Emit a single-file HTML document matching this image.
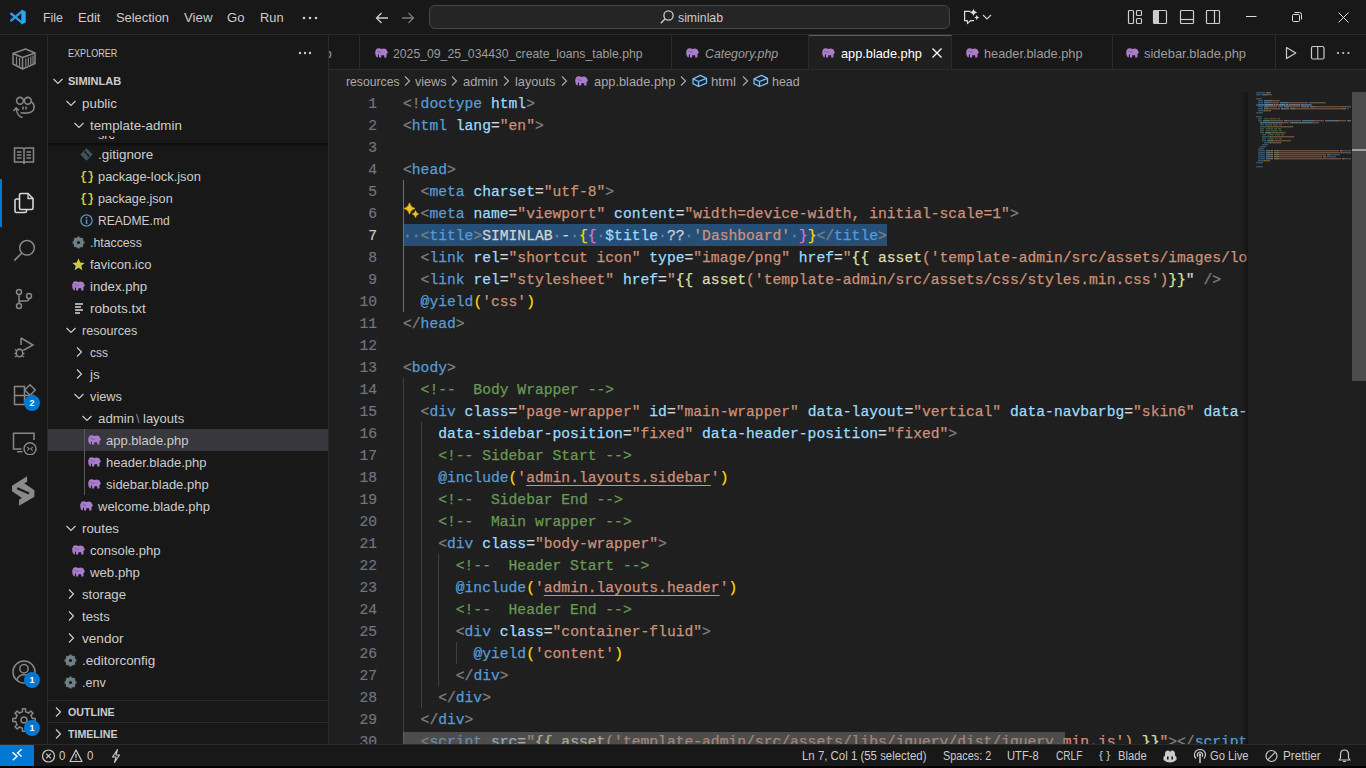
<!DOCTYPE html>
<html><head><meta charset="utf-8">
<style>
*{box-sizing:border-box;margin:0;padding:0}
html,body{width:1366px;height:768px;overflow:hidden;background:#181818;font-family:"Liberation Sans",sans-serif;color:#cccccc}
.abs{position:absolute}
#title{position:absolute;left:0;top:0;width:1366px;height:35px;background:#181818;border-bottom:1px solid #2b2b2b}
.menu{position:absolute;top:9px;font-size:13.5px;color:#cccccc;white-space:nowrap}
#act{position:absolute;left:0;top:35px;width:48px;height:709px;background:#181818;border-right:1px solid #2b2b2b}
#side{position:absolute;left:48px;top:35px;width:281px;height:709px;background:#181818;border-right:1px solid #2b2b2b;overflow:hidden}
.row{position:absolute;left:0;width:280px;height:22px;font-size:13px;line-height:22px;color:#cccccc;white-space:nowrap}
.row .tx{position:absolute;top:0}
.chev{position:absolute;top:6px}
#tabs{position:absolute;left:329px;top:35px;width:1037px;height:35px;background:#181818;border-bottom:1px solid #2b2b2b;overflow:hidden}
.tab{position:absolute;top:0;height:35px;background:#181818;border-right:1px solid #2b2b2b;font-size:13px;color:#9d9d9d;white-space:nowrap}
.tab .tx{position:absolute;top:10px}
#crumbs{position:absolute;left:329px;top:70px;width:1037px;height:22px;background:#1f1f1f;font-size:13px;color:#a9a9a9;white-space:nowrap}
#editor{position:absolute;left:329px;top:92px;width:1037px;height:652px;background:#1f1f1f;overflow:hidden}
#code{position:absolute;left:0;top:-92px;width:919px;height:744px;overflow:hidden}
.ln{position:absolute;left:74px;height:22px;line-height:24px;-webkit-text-stroke:0.25px;font-family:"Liberation Mono",monospace;font-size:14.667px;white-space:pre;color:#d4d4d4}
.num{position:absolute;left:0;width:48px;text-align:right;height:22px;line-height:24px;-webkit-text-stroke:0.2px;font-family:"Liberation Mono",monospace;font-size:14.667px;color:#6e7681}
.num.act{color:#cccccc}
.p{color:#808080}.t{color:#569cd6}.a{color:#9cdcfe}.s{color:#ce9178}.c{color:#6a9955}.w{color:#d4d4d4}
.y{color:#ffd700}.pu{color:#da70d6}.f{color:#dcdcaa}.k{color:#569cd6}.g{color:#d7e3a3}
.su{color:#ce9178;text-decoration:underline;text-underline-offset:3px}
.ws{color:#6b84a0}
.selbg{position:absolute;left:0;top:0;width:484px;height:22px;background:#264f78}
.ln span{position:relative}
.ln span.selbg{position:absolute}
.guide{position:absolute;width:1px;background:#404040}
#status{position:absolute;left:0;top:744px;width:1366px;height:22px;background:#181818;border-top:1px solid #2b2b2b;font-size:12px;color:#cccccc;white-space:nowrap}
#status .it{position:absolute;top:4px}
#bottomblack{position:absolute;left:0;top:766px;width:1366px;height:2px;background:#000}
.badge{position:absolute;width:16px;height:16px;border-radius:8px;background:#0078d4;color:#fff;font-size:9px;font-weight:bold;text-align:center;line-height:16px}
</style></head><body>
<!-- TITLE BAR -->
<div id="title">
<svg class="abs" style="left:9px;top:8px;" width="18" height="18" viewBox="0 0 18 18"><path d="M2.3 5.8 L13 14.6 M2.3 12.4 L13 3.4" stroke="#2b9be6" stroke-width="2.5" stroke-linecap="round"/><path d="M12.3 1.4 L16.7 3.4 V14.6 L12.3 16.6 Z" fill="#27a8f5"/></svg>
<div class="abs" style="left:42.5px;top:10.5px;font-size:13.5px;color:#cccccc;line-height:1;white-space:pre;transform:scaleX(0.9195);transform-origin:0 0;">File</div>
<div class="abs" style="left:78.0px;top:10.5px;font-size:13.5px;color:#cccccc;line-height:1;white-space:pre;transform:scaleX(0.9672);transform-origin:0 0;">Edit</div>
<div class="abs" style="left:115.5px;top:10.5px;font-size:13.5px;color:#cccccc;line-height:1;white-space:pre;transform:scaleX(0.9544);transform-origin:0 0;">Selection</div>
<div class="abs" style="left:183.8px;top:10.5px;font-size:13.5px;color:#cccccc;line-height:1;white-space:pre;transform:scaleX(0.9822);transform-origin:0 0;">View</div>
<div class="abs" style="left:227.3px;top:10.5px;font-size:13.5px;color:#cccccc;line-height:1;white-space:pre;transform:scaleX(0.9718);transform-origin:0 0;">Go</div>
<div class="abs" style="left:260.0px;top:10.5px;font-size:13.5px;color:#cccccc;line-height:1;white-space:pre;transform:scaleX(0.9490);transform-origin:0 0;">Run</div>
<svg class="abs" style="left:302px;top:16px;" width="16" height="4" viewBox="0 0 16 4"><circle cx="2" cy="2" r="1.3" fill="#ccc"/><circle cx="8" cy="2" r="1.3" fill="#ccc"/><circle cx="14" cy="2" r="1.3" fill="#ccc"/></svg>
<svg class="abs" style="left:374px;top:10px;" width="16" height="16" viewBox="0 0 16 16"><path d="M14 8 H2.5 M7.5 3 L2.5 8 L7.5 13" stroke="#cccccc" stroke-width="1.3" fill="none"/></svg>
<svg class="abs" style="left:400px;top:10px;" width="16" height="16" viewBox="0 0 16 16"><path d="M2 8 H13.5 M8.5 3 L13.5 8 L8.5 13" stroke="#7a7a7a" stroke-width="1.3" fill="none"/></svg>
<div class="abs" style="left:429px;top:5px;width:521px;height:24px;border:1px solid #464646;border-radius:6px;background:#252525"></div>
<svg class="abs" style="left:659px;top:9px;" width="16" height="16" viewBox="0 0 16 16"><circle cx="9.5" cy="6.5" r="4.6" stroke="#cccccc" stroke-width="1.3" fill="none"/><path d="M6.2 9.8 L1.8 14.2" stroke="#cccccc" stroke-width="1.4"/></svg>
<div class="abs" style="left:678.0px;top:11.1px;font-size:13px;color:#cccccc;line-height:1;white-space:pre;transform:scaleX(0.9438);transform-origin:0 0;">siminlab</div>
<svg class="abs" style="left:962px;top:8px;" width="20" height="18" viewBox="0 0 20 18"><path d="M8.5 3.4 H2.6 V12.6 H5.2 L5.6 15.4 L8.6 12.6 H12" stroke="#dddddd" stroke-width="1.2" fill="none"/><path d="M11.50 0.60 Q12.11 3.79 15.30 4.40 Q12.11 5.01 11.50 8.20 Q10.89 5.01 7.70 4.40 Q10.89 3.79 11.50 0.60 Z" fill="#dddddd"/><path d="M14.80 7.00 Q15.22 9.18 17.40 9.60 Q15.22 10.02 14.80 12.20 Q14.38 10.02 12.20 9.60 Q14.38 9.18 14.80 7.00 Z" fill="#dddddd"/></svg>
<svg class="abs" style="left:982px;top:12px;" width="10" height="8" viewBox="0 0 10 8"><path d="M1 3 L5 7 L9 3" stroke="#cccccc" stroke-width="1.2" fill="none"/></svg>
<svg class="abs" style="left:1127px;top:9px;" width="16" height="16" viewBox="0 0 16 16"><rect x="1.5" y="1.5" width="5" height="13" rx="1" stroke="#cccccc" stroke-width="1.2" fill="none"/><rect x="9.5" y="1.5" width="5" height="5" rx="1" stroke="#cccccc" stroke-width="1.2" fill="none"/><rect x="9.5" y="9.5" width="5" height="5" rx="1" stroke="#cccccc" stroke-width="1.2" fill="none"/></svg>
<svg class="abs" style="left:1152px;top:9px;" width="16" height="16" viewBox="0 0 16 16"><rect x="1.5" y="1.5" width="13" height="13" rx="1" stroke="#cccccc" stroke-width="1.2" fill="none"/><rect x="2" y="2" width="5" height="12" fill="#cccccc"/></svg>
<svg class="abs" style="left:1179px;top:9px;" width="16" height="16" viewBox="0 0 16 16"><rect x="1.5" y="1.5" width="13" height="13" rx="1" stroke="#cccccc" stroke-width="1.2" fill="none"/><path d="M1.5 10.5 H14.5" stroke="#cccccc" stroke-width="1.2"/></svg>
<svg class="abs" style="left:1205px;top:9px;" width="16" height="16" viewBox="0 0 16 16"><rect x="1.5" y="1.5" width="13" height="13" rx="1" stroke="#cccccc" stroke-width="1.2" fill="none"/><path d="M9.5 1.5 V14.5" stroke="#cccccc" stroke-width="1.2"/></svg>
<svg class="abs" style="left:1246px;top:16px;" width="11" height="1" viewBox="0 0 11 1"><rect x="0" y="0" width="10.5" height="1" fill="#dddddd"/></svg>
<svg class="abs" style="left:1291px;top:11px;" width="12" height="12" viewBox="0 0 12 12"><rect x="1.5" y="3.5" width="7" height="7" rx="1" stroke="#dddddd" stroke-width="1" fill="none"/><path d="M3.5 1.5 H8.5 Q10.5 1.5 10.5 3.5 V8.5" stroke="#dddddd" stroke-width="1" fill="none"/></svg>
<svg class="abs" style="left:1338px;top:12px;" width="11" height="11" viewBox="0 0 11 11"><path d="M0.5 0.5 L10.5 10.5 M10.5 0.5 L0.5 10.5" stroke="#dddddd" stroke-width="1"/></svg>
</div>
<!-- ACTIVITY BAR -->
<div id="act">
<svg class="abs" style="left:12px;top:12px;" width="30" height="24" viewBox="0 0 30 24"><path d="M1 6.5 L13.5 2 L23 6 V16.5 L10.5 22 L1 17 Z M1 6.5 L10.5 10.5 L23 6 M10.5 10.5 V22" stroke="#868686" stroke-width="1.5" fill="none" stroke-linejoin="round"/><path d="M4.5 9.5 V18.5 M7.5 10.8 V20 M13.8 11.5 V19.5 M16.3 10.5 V18.5 M18.8 9.5 V17.5 M21 8.5 V16.5" stroke="#868686" stroke-width="1.2"/></svg>
<svg class="abs" style="left:12px;top:60px;" width="30" height="24" viewBox="0 0 30 24"><circle cx="8" cy="5.8" r="3.4" stroke="#868686" stroke-width="1.6" fill="none"/><circle cx="15.8" cy="5.8" r="3.4" stroke="#868686" stroke-width="1.6" fill="none"/><path d="M19.2 7 Q22.5 8.5 22 13 Q21.5 17.5 15 18 Q11 18.3 8.5 17.5" stroke="#868686" stroke-width="1.6" fill="none"/><path d="M11 11.5 V14.5 M14 11.5 V14.5" stroke="#868686" stroke-width="1.6"/><path d="M10.5 22.5 Q5 21.5 4.2 13.5 M1.5 16 L4.2 12.8 L7 15.5" stroke="#868686" stroke-width="1.5" fill="none"/></svg>
<svg class="abs" style="left:12px;top:108px;" width="30" height="24" viewBox="0 0 30 24"><path d="M2.5 5 H10 Q12 5 12 7 Q12 5 14 5 H21.5 V19 H14 Q12 19 12 21 Q12 19 10 19 H2.5 Z M12 7 V20" stroke="#868686" stroke-width="1.5" fill="none"/><path d="M5 9 H9.5 M5 12 H9.5 M5 15 H9.5 M14.5 9 H19 M14.5 12 H19 M14.5 15 H19" stroke="#868686" stroke-width="1.3"/></svg>
<svg class="abs" style="left:12px;top:156px;" width="30" height="24" viewBox="0 0 30 24"><path d="M9 2.5 H16 L21 7.5 V17 Q21 18.5 19.5 18.5 H9 Q7.5 18.5 7.5 17 V4 Q7.5 2.5 9 2.5 Z" stroke="#d7d7d7" stroke-width="1.6" fill="none"/><path d="M16 2.5 V7.5 H21" stroke="#d7d7d7" stroke-width="1.3" fill="none"/><path d="M7.5 8 H4.5 Q3 8 3 9.5 V20 Q3 21.5 4.5 21.5 H13 Q14.5 21.5 14.5 20 V18.5" stroke="#d7d7d7" stroke-width="1.6" fill="none"/></svg>
<div class="abs" style="left:0;top:144px;width:2px;height:48px;background:#0078d4"></div>
<svg class="abs" style="left:12px;top:204px;" width="30" height="24" viewBox="0 0 30 24"><circle cx="15" cy="8.8" r="7.3" stroke="#868686" stroke-width="1.5" fill="none"/><path d="M9.8 14 L2.2 21.6" stroke="#868686" stroke-width="1.7"/></svg>
<svg class="abs" style="left:12px;top:252px;" width="30" height="24" viewBox="0 0 30 24"><circle cx="7" cy="5" r="2.5" stroke="#868686" stroke-width="1.5" fill="none"/><circle cx="7" cy="19" r="2.5" stroke="#868686" stroke-width="1.5" fill="none"/><circle cx="17" cy="9" r="2.5" stroke="#868686" stroke-width="1.5" fill="none"/><path d="M7 7.5 V16.5 M17 11.5 Q17 14 13 14 H9 Q7 14 7 16" stroke="#868686" stroke-width="1.5" fill="none"/></svg>
<svg class="abs" style="left:12px;top:300px;" width="30" height="24" viewBox="0 0 30 24"><path d="M9 3 V10 M9 3 L21 10 L12 15" stroke="#868686" stroke-width="1.5" fill="none"/><ellipse cx="7.5" cy="18" rx="3.2" ry="3.8" stroke="#868686" stroke-width="1.5" fill="none"/><path d="M3 14.5 L4.8 15.8 M12 14.5 L10.2 15.8 M2.5 18.5 H4.3 M12.5 18.5 H10.7 M3 22 L4.8 20.8 M12 22 L10.2 20.8 M5.5 14.5 H9.5" stroke="#868686" stroke-width="1.3"/></svg>
<svg class="abs" style="left:12px;top:348px;" width="30" height="24" viewBox="0 0 30 24"><path d="M2.5 3.5 H12.5 V21.5 H2.5 Z M2.5 12.5 H21.5 V21.5 H12.5" stroke="#868686" stroke-width="1.5" fill="none"/><path d="M18 1.7 L23.3 7 L18 12.3 L12.7 7 Z" stroke="#868686" stroke-width="1.5" fill="none"/></svg>
<div class="badge" style="left:24px;top:360px">2</div>
<svg class="abs" style="left:12px;top:396px;" width="30" height="24" viewBox="0 0 30 24"><path d="M9.5 18 H1.5 V2.2 H22 V9" stroke="#868686" stroke-width="1.5" fill="none"/><path d="M5 20.7 H10.5" stroke="#868686" stroke-width="1.5"/><circle cx="18" cy="17.8" r="6" stroke="#868686" stroke-width="1.5" fill="none"/><path d="M15.3 16 L17.2 17.8 L15.3 19.6 M20.7 16 L18.8 17.8 L20.7 19.6" stroke="#868686" stroke-width="1.1" fill="none"/></svg>
<svg class="abs" style="left:10px;top:439px;" width="26" height="34" viewBox="0 0 26 34"><path d="M17.1 2.3 V7.8 L14.2 9.3 L24.4 16.2 V22.8 L9.1 31.8 V25.8 L11.9 23.9 L2 17.3 V11.7 Z" fill="#8a8a8a"/><path d="M7.2 14.2 L19 19.6" stroke="#181818" stroke-width="2.2"/></svg>
<svg class="abs" style="left:12px;top:625px;" width="30" height="24" viewBox="0 0 30 24"><circle cx="12" cy="12" r="11" stroke="#868686" stroke-width="1.5" fill="none"/><circle cx="12" cy="8.8" r="4.2" stroke="#868686" stroke-width="1.5" fill="none"/><path d="M4.8 20 Q6.5 14.8 12 14.8 Q17.5 14.8 19.2 20" stroke="#868686" stroke-width="1.5" fill="none"/></svg>
<div class="badge" style="left:24px;top:637px">1</div>
<svg class="abs" style="left:12px;top:673px;" width="30" height="24" viewBox="0 0 30 24"><path d="M19.82 9.23 L20.15 10.42 L23.19 10.43 L23.19 13.57 L20.15 13.58 L19.82 14.77 L19.49 15.57 L18.88 16.64 L21.02 18.80 L18.80 21.02 L16.64 18.88 L15.57 19.49 L14.77 19.82 L13.58 20.15 L13.57 23.19 L10.43 23.19 L10.42 20.15 L9.23 19.82 L8.43 19.49 L7.36 18.88 L5.20 21.02 L2.98 18.80 L5.12 16.64 L4.51 15.57 L4.18 14.77 L3.85 13.58 L0.81 13.57 L0.81 10.43 L3.85 10.42 L4.18 9.23 L4.51 8.43 L5.12 7.36 L2.98 5.20 L5.20 2.98 L7.36 5.12 L8.43 4.51 L9.23 4.18 L10.42 3.85 L10.43 0.81 L13.57 0.81 L13.58 3.85 L14.77 4.18 L15.57 4.51 L16.64 5.12 L18.80 2.98 L21.02 5.20 L18.88 7.36 L19.49 8.43 Z" stroke="#868686" stroke-width="1.5" fill="none" stroke-linejoin="round"/><circle cx="12" cy="12" r="3" stroke="#868686" stroke-width="1.5" fill="none"/></svg>
<div class="badge" style="left:24px;top:685px">1</div>
</div>
<!-- SIDEBAR -->
<div id="side">
<div class="abs" style="left:20.0px;top:12.6px;font-size:11px;color:#cccccc;line-height:1;white-space:pre;transform:scaleX(0.8246);transform-origin:0 0;">EXPLORER</div>
<svg class="abs" style="left:250px;top:16px;" width="14" height="4" viewBox="0 0 14 4"><circle cx="2" cy="2" r="1.2" fill="#ccc"/><circle cx="7" cy="2" r="1.2" fill="#ccc"/><circle cx="12" cy="2" r="1.2" fill="#ccc"/></svg>
<svg class="abs" style="left:2px;top:38px;" width="16" height="16" viewBox="0 0 16 16"><path d="M3.5 6 L8 10.5 L12.5 6" stroke="#cccccc" stroke-width="1.2" fill="none"/></svg>
<div class="abs" style="left:20.0px;top:40.6px;font-size:11px;color:#cccccc;line-height:1;white-space:pre;font-weight:bold;">SIMINLAB</div>
<div class="abs" style="left:0;top:394px;width:280px;height:22px;background:#37373d"></div>
<div class="abs" style="left:36px;top:394px;width:1px;height:66px;background:#585858"></div>
<svg class="abs" style="left:32px;top:112.5px;" width="13" height="13" viewBox="0 0 13 13"><path d="M6.5 0.3 L12.7 6.5 L6.5 12.7 L0.3 6.5 Z" fill="#41535b"/><path d="M5 4 L8.5 7.5" stroke="#181818" stroke-width="1.4"/><circle cx="5" cy="4" r="1" fill="#181818"/><circle cx="8.5" cy="8" r="1" fill="#181818"/></svg><div class="abs" style="left:50.0px;top:112.5px;font-size:13px;color:#cccccc;line-height:1;white-space:pre;transform:scaleX(1.0341);transform-origin:0 0;">.gitignore</div>
<svg class="abs" style="left:32px;top:134px;" width="13" height="14" viewBox="0 0 13 14"><text x="0" y="11" font-family="Liberation Mono" font-weight="bold" font-size="12" fill="#cbcb41">{}</text></svg><div class="abs" style="left:50.0px;top:134.5px;font-size:13px;color:#cccccc;line-height:1;white-space:pre;transform:scaleX(0.9880);transform-origin:0 0;">package-lock.json</div>
<svg class="abs" style="left:32px;top:156px;" width="13" height="14" viewBox="0 0 13 14"><text x="0" y="11" font-family="Liberation Mono" font-weight="bold" font-size="12" fill="#cbcb41">{}</text></svg><div class="abs" style="left:50.0px;top:156.5px;font-size:13px;color:#cccccc;line-height:1;white-space:pre;transform:scaleX(0.9751);transform-origin:0 0;">package.json</div>
<svg class="abs" style="left:32px;top:178.5px;" width="13" height="13" viewBox="0 0 13 13"><circle cx="6.5" cy="6.5" r="5.6" stroke="#519aba" stroke-width="1.3" fill="none"/><rect x="5.8" y="5.5" width="1.5" height="4.5" fill="#519aba"/><rect x="5.8" y="3" width="1.5" height="1.5" fill="#519aba"/></svg><div class="abs" style="left:50.0px;top:178.5px;font-size:13px;color:#cccccc;line-height:1;white-space:pre;transform:scaleX(0.9277);transform-origin:0 0;">README.md</div>
<svg class="abs" style="left:24px;top:200.5px;" width="13" height="13" viewBox="0 0 13 13"><circle cx="6.5" cy="6.5" r="3.9" stroke="#6d8086" stroke-width="2.6" fill="none"/><path d="M6.5 0.5 V12.5 M0.5 6.5 H12.5 M2.3 2.3 L10.7 10.7 M10.7 2.3 L2.3 10.7" stroke="#6d8086" stroke-width="2"/><circle cx="6.5" cy="6.5" r="1.6" fill="#181818"/></svg><div class="abs" style="left:42.0px;top:200.5px;font-size:13px;color:#cccccc;line-height:1;white-space:pre;transform:scaleX(0.9452);transform-origin:0 0;">.htaccess</div>
<svg class="abs" style="left:24px;top:222.5px;" width="13" height="13" viewBox="0 0 13 13"><path d="M6.5 0.5 L8.3 4.6 L12.7 4.9 L9.3 7.8 L10.4 12.2 L6.5 9.8 L2.6 12.2 L3.7 7.8 L0.3 4.9 L4.7 4.6 Z" fill="#cbcb41"/></svg><div class="abs" style="left:42.0px;top:222.5px;font-size:13px;color:#cccccc;line-height:1;white-space:pre;">favicon.ico</div>
<svg class="abs" style="left:24px;top:246px;" width="14" height="10" viewBox="0 0 14 10"><path d="M1.6 9.3 Q0.2 7.5 0.2 4.8 Q0.2 0.4 3.6 0.2 Q5.4 0.2 6.3 1 Q7 0.6 9 0.6 Q11.8 0.8 12.4 3.6 L13 4.6 L11.6 6 L11.4 9.5 H9.2 V7.2 H6.2 V9.5 H4 V6.6 Q3.2 6.4 2.9 6.8 V9.3 Z" fill="#a97dcc"/><path d="M2.4 2.6 Q3.6 4.8 6.6 4.2" stroke="#7b55a0" stroke-width="0.9" fill="none"/></svg><div class="abs" style="left:42.0px;top:244.5px;font-size:13px;color:#cccccc;line-height:1;white-space:pre;transform:scaleX(1.0146);transform-origin:0 0;">index.php</div>
<svg class="abs" style="left:24px;top:267px;" width="12" height="12" viewBox="0 0 12 12"><path d="M3 2 H11 M3 5 H9 M3 8 H11 M3 11 H8" stroke="#d4d7d6" stroke-width="1.4"/></svg><div class="abs" style="left:42.0px;top:266.5px;font-size:13px;color:#cccccc;line-height:1;white-space:pre;transform:scaleX(1.0437);transform-origin:0 0;">robots.txt</div>
<svg class="abs" style="left:15px;top:287px;" width="16" height="16" viewBox="0 0 16 16"><path d="M3.5 6 L8 10.5 L12.5 6" stroke="#cccccc" stroke-width="1.2" fill="none"/></svg><div class="abs" style="left:34.0px;top:288.5px;font-size:13px;color:#cccccc;line-height:1;white-space:pre;transform:scaleX(0.9689);transform-origin:0 0;">resources</div>
<svg class="abs" style="left:23px;top:309px;" width="16" height="16" viewBox="0 0 16 16"><path d="M6 3.5 L10.5 8 L6 12.5" stroke="#cccccc" stroke-width="1.2" fill="none"/></svg><div class="abs" style="left:42.0px;top:310.5px;font-size:13px;color:#cccccc;line-height:1;white-space:pre;transform:scaleX(0.9179);transform-origin:0 0;">css</div>
<svg class="abs" style="left:23px;top:331px;" width="16" height="16" viewBox="0 0 16 16"><path d="M6 3.5 L10.5 8 L6 12.5" stroke="#cccccc" stroke-width="1.2" fill="none"/></svg><div class="abs" style="left:42.0px;top:332.5px;font-size:13px;color:#cccccc;line-height:1;white-space:pre;transform:scaleX(1.0332);transform-origin:0 0;">js</div>
<svg class="abs" style="left:23px;top:353px;" width="16" height="16" viewBox="0 0 16 16"><path d="M3.5 6 L8 10.5 L12.5 6" stroke="#cccccc" stroke-width="1.2" fill="none"/></svg><div class="abs" style="left:42.0px;top:354.5px;font-size:13px;color:#cccccc;line-height:1;white-space:pre;transform:scaleX(0.9844);transform-origin:0 0;">views</div>
<svg class="abs" style="left:31px;top:375px;" width="16" height="16" viewBox="0 0 16 16"><path d="M3.5 6 L8 10.5 L12.5 6" stroke="#cccccc" stroke-width="1.2" fill="none"/></svg><div class="abs" style="left:50.0px;top:376.5px;font-size:13px;color:#cccccc;line-height:1;white-space:pre;transform:scaleX(1.0225);transform-origin:0 0;">admin</div><div class="abs" style="left:88.0px;top:376.5px;font-size:13px;color:#8a8a8a;line-height:1;white-space:pre;">\</div><div class="abs" style="left:95.0px;top:376.5px;font-size:13px;color:#cccccc;line-height:1;white-space:pre;">layouts</div>
<svg class="abs" style="left:40px;top:400px;" width="14" height="10" viewBox="0 0 14 10"><path d="M1.6 9.3 Q0.2 7.5 0.2 4.8 Q0.2 0.4 3.6 0.2 Q5.4 0.2 6.3 1 Q7 0.6 9 0.6 Q11.8 0.8 12.4 3.6 L13 4.6 L11.6 6 L11.4 9.5 H9.2 V7.2 H6.2 V9.5 H4 V6.6 Q3.2 6.4 2.9 6.8 V9.3 Z" fill="#a97dcc"/><path d="M2.4 2.6 Q3.6 4.8 6.6 4.2" stroke="#7b55a0" stroke-width="0.9" fill="none"/></svg><div class="abs" style="left:58.0px;top:398.5px;font-size:13px;color:#cccccc;line-height:1;white-space:pre;">app.blade.php</div>
<svg class="abs" style="left:40px;top:422px;" width="14" height="10" viewBox="0 0 14 10"><path d="M1.6 9.3 Q0.2 7.5 0.2 4.8 Q0.2 0.4 3.6 0.2 Q5.4 0.2 6.3 1 Q7 0.6 9 0.6 Q11.8 0.8 12.4 3.6 L13 4.6 L11.6 6 L11.4 9.5 H9.2 V7.2 H6.2 V9.5 H4 V6.6 Q3.2 6.4 2.9 6.8 V9.3 Z" fill="#a97dcc"/><path d="M2.4 2.6 Q3.6 4.8 6.6 4.2" stroke="#7b55a0" stroke-width="0.9" fill="none"/></svg><div class="abs" style="left:58.0px;top:420.5px;font-size:13px;color:#cccccc;line-height:1;white-space:pre;">header.blade.php</div>
<svg class="abs" style="left:40px;top:444px;" width="14" height="10" viewBox="0 0 14 10"><path d="M1.6 9.3 Q0.2 7.5 0.2 4.8 Q0.2 0.4 3.6 0.2 Q5.4 0.2 6.3 1 Q7 0.6 9 0.6 Q11.8 0.8 12.4 3.6 L13 4.6 L11.6 6 L11.4 9.5 H9.2 V7.2 H6.2 V9.5 H4 V6.6 Q3.2 6.4 2.9 6.8 V9.3 Z" fill="#a97dcc"/><path d="M2.4 2.6 Q3.6 4.8 6.6 4.2" stroke="#7b55a0" stroke-width="0.9" fill="none"/></svg><div class="abs" style="left:58.0px;top:442.5px;font-size:13px;color:#cccccc;line-height:1;white-space:pre;">sidebar.blade.php</div>
<svg class="abs" style="left:32px;top:466px;" width="14" height="10" viewBox="0 0 14 10"><path d="M1.6 9.3 Q0.2 7.5 0.2 4.8 Q0.2 0.4 3.6 0.2 Q5.4 0.2 6.3 1 Q7 0.6 9 0.6 Q11.8 0.8 12.4 3.6 L13 4.6 L11.6 6 L11.4 9.5 H9.2 V7.2 H6.2 V9.5 H4 V6.6 Q3.2 6.4 2.9 6.8 V9.3 Z" fill="#a97dcc"/><path d="M2.4 2.6 Q3.6 4.8 6.6 4.2" stroke="#7b55a0" stroke-width="0.9" fill="none"/></svg><div class="abs" style="left:50.0px;top:464.5px;font-size:13px;color:#cccccc;line-height:1;white-space:pre;">welcome.blade.php</div>
<svg class="abs" style="left:15px;top:485px;" width="16" height="16" viewBox="0 0 16 16"><path d="M3.5 6 L8 10.5 L12.5 6" stroke="#cccccc" stroke-width="1.2" fill="none"/></svg><div class="abs" style="left:34.0px;top:486.5px;font-size:13px;color:#cccccc;line-height:1;white-space:pre;transform:scaleX(1.0241);transform-origin:0 0;">routes</div>
<svg class="abs" style="left:24px;top:510px;" width="14" height="10" viewBox="0 0 14 10"><path d="M1.6 9.3 Q0.2 7.5 0.2 4.8 Q0.2 0.4 3.6 0.2 Q5.4 0.2 6.3 1 Q7 0.6 9 0.6 Q11.8 0.8 12.4 3.6 L13 4.6 L11.6 6 L11.4 9.5 H9.2 V7.2 H6.2 V9.5 H4 V6.6 Q3.2 6.4 2.9 6.8 V9.3 Z" fill="#a97dcc"/><path d="M2.4 2.6 Q3.6 4.8 6.6 4.2" stroke="#7b55a0" stroke-width="0.9" fill="none"/></svg><div class="abs" style="left:42.0px;top:508.5px;font-size:13px;color:#cccccc;line-height:1;white-space:pre;transform:scaleX(1.0056);transform-origin:0 0;">console.php</div>
<svg class="abs" style="left:24px;top:532px;" width="14" height="10" viewBox="0 0 14 10"><path d="M1.6 9.3 Q0.2 7.5 0.2 4.8 Q0.2 0.4 3.6 0.2 Q5.4 0.2 6.3 1 Q7 0.6 9 0.6 Q11.8 0.8 12.4 3.6 L13 4.6 L11.6 6 L11.4 9.5 H9.2 V7.2 H6.2 V9.5 H4 V6.6 Q3.2 6.4 2.9 6.8 V9.3 Z" fill="#a97dcc"/><path d="M2.4 2.6 Q3.6 4.8 6.6 4.2" stroke="#7b55a0" stroke-width="0.9" fill="none"/></svg><div class="abs" style="left:42.0px;top:530.5px;font-size:13px;color:#cccccc;line-height:1;white-space:pre;transform:scaleX(1.0153);transform-origin:0 0;">web.php</div>
<svg class="abs" style="left:15px;top:551px;" width="16" height="16" viewBox="0 0 16 16"><path d="M6 3.5 L10.5 8 L6 12.5" stroke="#cccccc" stroke-width="1.2" fill="none"/></svg><div class="abs" style="left:34.0px;top:552.5px;font-size:13px;color:#cccccc;line-height:1;white-space:pre;transform:scaleX(1.0148);transform-origin:0 0;">storage</div>
<svg class="abs" style="left:15px;top:573px;" width="16" height="16" viewBox="0 0 16 16"><path d="M6 3.5 L10.5 8 L6 12.5" stroke="#cccccc" stroke-width="1.2" fill="none"/></svg><div class="abs" style="left:34.0px;top:574.5px;font-size:13px;color:#cccccc;line-height:1;white-space:pre;transform:scaleX(1.0090);transform-origin:0 0;">tests</div>
<svg class="abs" style="left:15px;top:595px;" width="16" height="16" viewBox="0 0 16 16"><path d="M6 3.5 L10.5 8 L6 12.5" stroke="#cccccc" stroke-width="1.2" fill="none"/></svg><div class="abs" style="left:34.0px;top:596.5px;font-size:13px;color:#cccccc;line-height:1;white-space:pre;transform:scaleX(1.0441);transform-origin:0 0;">vendor</div>
<svg class="abs" style="left:16px;top:618.5px;" width="13" height="13" viewBox="0 0 13 13"><circle cx="6.5" cy="6.5" r="3.9" stroke="#6d8086" stroke-width="2.6" fill="none"/><path d="M6.5 0.5 V12.5 M0.5 6.5 H12.5 M2.3 2.3 L10.7 10.7 M10.7 2.3 L2.3 10.7" stroke="#6d8086" stroke-width="2"/><circle cx="6.5" cy="6.5" r="1.6" fill="#181818"/></svg><div class="abs" style="left:34.0px;top:618.5px;font-size:13px;color:#cccccc;line-height:1;white-space:pre;transform:scaleX(1.0351);transform-origin:0 0;">.editorconfig</div>
<svg class="abs" style="left:16px;top:640.5px;" width="13" height="13" viewBox="0 0 13 13"><circle cx="6.5" cy="6.5" r="3.9" stroke="#6d8086" stroke-width="2.6" fill="none"/><path d="M6.5 0.5 V12.5 M0.5 6.5 H12.5 M2.3 2.3 L10.7 10.7 M10.7 2.3 L2.3 10.7" stroke="#6d8086" stroke-width="2"/><circle cx="6.5" cy="6.5" r="1.6" fill="#181818"/></svg><div class="abs" style="left:34.0px;top:640.5px;font-size:13px;color:#cccccc;line-height:1;white-space:pre;transform:scaleX(0.9687);transform-origin:0 0;">.env</div>
<svg class="abs" style="left:20px;top:664.5px;" width="4" height="4" viewBox="0 0 4 4"><rect x="1" y="0" width="2" height="3" fill="#8dc149"/></svg><div class="abs" style="left:34.0px;top:662.5px;font-size:13px;color:#cccccc;line-height:1;white-space:pre;transform:scaleX(0.9650);transform-origin:0 0;">.env.example</div>
<div class="abs" style="left:0;top:57px;width:280px;height:51px;background:#181818;overflow:hidden;box-shadow:0 2px 3px rgba(0,0,0,0.55)">
<div class="abs" style="left:50.0px;top:35.5px;font-size:13px;color:#cccccc;line-height:1;white-space:pre;transform:scaleX(0.9637);transform-origin:0 0;">src</div>
<div class="abs" style="left:0;top:0;width:280px;height:44px;background:#181818"></div>
<svg class="abs" style="left:15px;top:3px;" width="16" height="16" viewBox="0 0 16 16"><path d="M3.5 6 L8 10.5 L12.5 6" stroke="#cccccc" stroke-width="1.2" fill="none"/></svg>
<div class="abs" style="left:34.0px;top:4.5px;font-size:13px;color:#cccccc;line-height:1;white-space:pre;transform:scaleX(1.0305);transform-origin:0 0;">public</div>
<svg class="abs" style="left:23px;top:25px;" width="16" height="16" viewBox="0 0 16 16"><path d="M3.5 6 L8 10.5 L12.5 6" stroke="#cccccc" stroke-width="1.2" fill="none"/></svg>
<div class="abs" style="left:42.0px;top:26.5px;font-size:13px;color:#cccccc;line-height:1;white-space:pre;transform:scaleX(1.0247);transform-origin:0 0;">template-admin</div>
</div>
<div class="abs" style="left:0;top:665px;width:280px;height:44px;background:#181818;border-top:1px solid #2b2b2b"></div>
<div class="abs" style="left:0;top:687px;width:280px;height:1px;background:#2b2b2b"></div>
<svg class="abs" style="left:2px;top:669px;" width="16" height="16" viewBox="0 0 16 16"><path d="M6 3.5 L10.5 8 L6 12.5" stroke="#cccccc" stroke-width="1.2" fill="none"/></svg>
<div class="abs" style="left:20.0px;top:671.6px;font-size:11px;color:#cccccc;line-height:1;white-space:pre;font-weight:bold;transform:scaleX(0.9674);transform-origin:0 0;">OUTLINE</div>
<svg class="abs" style="left:2px;top:691px;" width="16" height="16" viewBox="0 0 16 16"><path d="M6 3.5 L10.5 8 L6 12.5" stroke="#cccccc" stroke-width="1.2" fill="none"/></svg>
<div class="abs" style="left:20.0px;top:693.6px;font-size:11px;color:#cccccc;line-height:1;white-space:pre;font-weight:bold;transform:scaleX(0.9643);transform-origin:0 0;">TIMELINE</div>
</div>
<!-- TABS -->
<div id="tabs">
<div class="tab" style="left:-20px;width:51px"></div>
<div class="abs" style="left:-19.0px;top:11.5px;font-size:13px;color:#9d9d9d;line-height:1;white-space:pre;">php</div>
<div class="tab" style="left:31px;width:312px;"></div><svg class="abs" style="left:45.5px;top:13px;" width="14" height="10" viewBox="0 0 14 10"><path d="M1.6 9.3 Q0.2 7.5 0.2 4.8 Q0.2 0.4 3.6 0.2 Q5.4 0.2 6.3 1 Q7 0.6 9 0.6 Q11.8 0.8 12.4 3.6 L13 4.6 L11.6 6 L11.4 9.5 H9.2 V7.2 H6.2 V9.5 H4 V6.6 Q3.2 6.4 2.9 6.8 V9.3 Z" fill="#a97dcc"/><path d="M2.4 2.6 Q3.6 4.8 6.6 4.2" stroke="#7b55a0" stroke-width="0.9" fill="none"/></svg><div class="abs" style="left:64.3px;top:11.5px;font-size:13px;color:#9d9d9d;line-height:1;white-space:pre;transform:scaleX(0.9409);transform-origin:0 0;">2025_09_25_034430_create_loans_table.php</div>
<div class="tab" style="left:343px;width:137px;"></div><svg class="abs" style="left:356.6px;top:13px;" width="14" height="10" viewBox="0 0 14 10"><path d="M1.6 9.3 Q0.2 7.5 0.2 4.8 Q0.2 0.4 3.6 0.2 Q5.4 0.2 6.3 1 Q7 0.6 9 0.6 Q11.8 0.8 12.4 3.6 L13 4.6 L11.6 6 L11.4 9.5 H9.2 V7.2 H6.2 V9.5 H4 V6.6 Q3.2 6.4 2.9 6.8 V9.3 Z" fill="#a97dcc"/><path d="M2.4 2.6 Q3.6 4.8 6.6 4.2" stroke="#7b55a0" stroke-width="0.9" fill="none"/></svg><div class="abs" style="left:375.8px;top:11.5px;font-size:13px;color:#9d9d9d;line-height:1;white-space:pre;font-style:italic;transform:scaleX(0.9497);transform-origin:0 0;">Category.php</div>
<div class="tab" style="left:480px;width:143px;background:#1f1f1f;height:36px;border-top:1px solid #0078d4;"></div><svg class="abs" style="left:492.79999999999995px;top:13px;" width="14" height="10" viewBox="0 0 14 10"><path d="M1.6 9.3 Q0.2 7.5 0.2 4.8 Q0.2 0.4 3.6 0.2 Q5.4 0.2 6.3 1 Q7 0.6 9 0.6 Q11.8 0.8 12.4 3.6 L13 4.6 L11.6 6 L11.4 9.5 H9.2 V7.2 H6.2 V9.5 H4 V6.6 Q3.2 6.4 2.9 6.8 V9.3 Z" fill="#a97dcc"/><path d="M2.4 2.6 Q3.6 4.8 6.6 4.2" stroke="#7b55a0" stroke-width="0.9" fill="none"/></svg><div class="abs" style="left:512.0px;top:11.5px;font-size:13px;color:#ffffff;line-height:1;white-space:pre;transform:scaleX(0.9805);transform-origin:0 0;">app.blade.php</div><svg class="abs" style="left:602px;top:12px;" width="12" height="12" viewBox="0 0 12 12"><path d="M1.5 1.5 L10.5 10.5 M10.5 1.5 L1.5 10.5" stroke="#ffffff" stroke-width="1.3"/></svg>
<div class="tab" style="left:623px;width:161px;"></div><svg class="abs" style="left:636.6px;top:13px;" width="14" height="10" viewBox="0 0 14 10"><path d="M1.6 9.3 Q0.2 7.5 0.2 4.8 Q0.2 0.4 3.6 0.2 Q5.4 0.2 6.3 1 Q7 0.6 9 0.6 Q11.8 0.8 12.4 3.6 L13 4.6 L11.6 6 L11.4 9.5 H9.2 V7.2 H6.2 V9.5 H4 V6.6 Q3.2 6.4 2.9 6.8 V9.3 Z" fill="#a97dcc"/><path d="M2.4 2.6 Q3.6 4.8 6.6 4.2" stroke="#7b55a0" stroke-width="0.9" fill="none"/></svg><div class="abs" style="left:655.3px;top:11.5px;font-size:13px;color:#9d9d9d;line-height:1;white-space:pre;transform:scaleX(0.9804);transform-origin:0 0;">header.blade.php</div>
<div class="tab" style="left:784px;width:163px;"></div><svg class="abs" style="left:797px;top:13px;" width="14" height="10" viewBox="0 0 14 10"><path d="M1.6 9.3 Q0.2 7.5 0.2 4.8 Q0.2 0.4 3.6 0.2 Q5.4 0.2 6.3 1 Q7 0.6 9 0.6 Q11.8 0.8 12.4 3.6 L13 4.6 L11.6 6 L11.4 9.5 H9.2 V7.2 H6.2 V9.5 H4 V6.6 Q3.2 6.4 2.9 6.8 V9.3 Z" fill="#a97dcc"/><path d="M2.4 2.6 Q3.6 4.8 6.6 4.2" stroke="#7b55a0" stroke-width="0.9" fill="none"/></svg><div class="abs" style="left:815.2px;top:11.5px;font-size:13px;color:#9d9d9d;line-height:1;white-space:pre;transform:scaleX(0.9938);transform-origin:0 0;">sidebar.blade.php</div>
<svg class="abs" style="left:955px;top:10px;" width="16" height="16" viewBox="0 0 16 16"><path d="M2.5 2.5 L11.8 8 L2.5 13.5 Z" stroke="#cccccc" stroke-width="1.2" fill="none" stroke-linejoin="round"/></svg>
<svg class="abs" style="left:981px;top:10px;" width="16" height="16" viewBox="0 0 16 16"><rect x="1.5" y="1.5" width="12.5" height="12.5" rx="1.5" stroke="#cccccc" stroke-width="1.2" fill="none"/><path d="M7.75 1.5 V14" stroke="#cccccc" stroke-width="1.1"/></svg>
<svg class="abs" style="left:1007px;top:16px;" width="16" height="4" viewBox="0 0 16 4"><circle cx="2" cy="2" r="1.1" fill="#ccc"/><circle cx="7.2" cy="2" r="1.1" fill="#ccc"/><circle cx="12.4" cy="2" r="1.1" fill="#ccc"/></svg>
</div>
<div id="crumbs">
<div class="abs" style="left:16.6px;top:4.5px;font-size:13px;color:#a9a9a9;line-height:1;white-space:pre;transform:scaleX(0.9374);transform-origin:0 0;">resources</div>
<svg class="abs" style="left:69.69999999999999px;top:3px;" width="16" height="16" viewBox="0 0 16 16"><path d="M6 3.5 L10.5 8 L6 12.5" stroke="#a9a9a9" stroke-width="1.2" fill="none"/></svg>
<svg class="abs" style="left:117.30000000000001px;top:3px;" width="16" height="16" viewBox="0 0 16 16"><path d="M6 3.5 L10.5 8 L6 12.5" stroke="#a9a9a9" stroke-width="1.2" fill="none"/></svg>
<svg class="abs" style="left:169px;top:3px;" width="16" height="16" viewBox="0 0 16 16"><path d="M6 3.5 L10.5 8 L6 12.5" stroke="#a9a9a9" stroke-width="1.2" fill="none"/></svg>
<svg class="abs" style="left:226.70000000000005px;top:3px;" width="16" height="16" viewBox="0 0 16 16"><path d="M6 3.5 L10.5 8 L6 12.5" stroke="#a9a9a9" stroke-width="1.2" fill="none"/></svg>
<svg class="abs" style="left:346px;top:3px;" width="16" height="16" viewBox="0 0 16 16"><path d="M6 3.5 L10.5 8 L6 12.5" stroke="#a9a9a9" stroke-width="1.2" fill="none"/></svg>
<svg class="abs" style="left:407.6px;top:3px;" width="16" height="16" viewBox="0 0 16 16"><path d="M6 3.5 L10.5 8 L6 12.5" stroke="#a9a9a9" stroke-width="1.2" fill="none"/></svg>
<div class="abs" style="left:86.4px;top:4.5px;font-size:13px;color:#a9a9a9;line-height:1;white-space:pre;transform:scaleX(0.9690);transform-origin:0 0;">views</div>
<div class="abs" style="left:134.0px;top:4.5px;font-size:13px;color:#a9a9a9;line-height:1;white-space:pre;transform:scaleX(0.9886);transform-origin:0 0;">admin</div>
<div class="abs" style="left:186.3px;top:4.5px;font-size:13px;color:#a9a9a9;line-height:1;white-space:pre;transform:scaleX(0.9784);transform-origin:0 0;">layouts</div>
<svg class="abs" style="left:246px;top:6px;" width="14" height="10" viewBox="0 0 14 10"><path d="M1.6 9.3 Q0.2 7.5 0.2 4.8 Q0.2 0.4 3.6 0.2 Q5.4 0.2 6.3 1 Q7 0.6 9 0.6 Q11.8 0.8 12.4 3.6 L13 4.6 L11.6 6 L11.4 9.5 H9.2 V7.2 H6.2 V9.5 H4 V6.6 Q3.2 6.4 2.9 6.8 V9.3 Z" fill="#a97dcc"/><path d="M2.4 2.6 Q3.6 4.8 6.6 4.2" stroke="#7b55a0" stroke-width="0.9" fill="none"/></svg>
<div class="abs" style="left:265.0px;top:4.5px;font-size:13px;color:#a9a9a9;line-height:1;white-space:pre;transform:scaleX(0.9866);transform-origin:0 0;">app.blade.php</div>
<svg class="abs" style="left:363px;top:4px;" width="16" height="14" viewBox="0 0 16 14"><path d="M1 4.8 L8.4 1.3 L14.5 4.3 V9.2 L6.5 12.5 L1 9.7 Z M1 4.8 L6.5 7.5 L14.5 4.3 M6.5 7.5 V12.5" stroke="#75beff" stroke-width="1.3" fill="none" stroke-linejoin="round"/></svg>
<div class="abs" style="left:382.0px;top:4.5px;font-size:13px;color:#a9a9a9;line-height:1;white-space:pre;transform:scaleX(1.0180);transform-origin:0 0;">html</div>
<svg class="abs" style="left:424px;top:4px;" width="16" height="14" viewBox="0 0 16 14"><path d="M1 4.8 L8.4 1.3 L14.5 4.3 V9.2 L6.5 12.5 L1 9.7 Z M1 4.8 L6.5 7.5 L14.5 4.3 M6.5 7.5 V12.5" stroke="#75beff" stroke-width="1.3" fill="none" stroke-linejoin="round"/></svg>
<div class="abs" style="left:443.0px;top:4.5px;font-size:13px;color:#a9a9a9;line-height:1;white-space:pre;transform:scaleX(0.9579);transform-origin:0 0;">head</div>
</div>
<div id="editor"><div id="code">
<div class="ln" style="top:92px"><span class="p">&lt;!</span><span class="t">doctype</span><span class="w"> </span><span class="a">html</span><span class="p">&gt;</span></div>
<div class="num" style="top:92px">1</div>
<div class="ln" style="top:114px"><span class="w"></span><span class="p">&lt;</span><span class="t">html</span><span class="w"> </span><span class="a">lang</span><span class="w">=</span><span class="s">&quot;en&quot;</span><span class="p">&gt;</span></div>
<div class="num" style="top:114px">2</div>
<div class="ln" style="top:136px"></div>
<div class="num" style="top:136px">3</div>
<div class="ln" style="top:158px"><span class="p">&lt;</span><span class="t">head</span><span class="p">&gt;</span></div>
<div class="num" style="top:158px">4</div>
<div class="ln" style="top:180px"><span class="w">  </span><span class="p">&lt;</span><span class="t">meta</span><span class="w"> </span><span class="a">charset</span><span class="w">=</span><span class="s">&quot;utf-8&quot;</span><span class="p">&gt;</span></div>
<div class="num" style="top:180px">5</div>
<div class="ln" style="top:202px"><span class="w">  </span><span class="p">&lt;</span><span class="t">meta</span><span class="w"> </span><span class="a">name</span><span class="w">=</span><span class="s">&quot;viewport&quot;</span><span class="w"> </span><span class="a">content</span><span class="w">=</span><span class="s">&quot;width=device-width, initial-scale=1&quot;</span><span class="p">&gt;</span></div>
<div class="num" style="top:202px">6</div>
<div class="ln" style="top:224px"><span class="selbg"></span><span class="ws">··</span><span class="p">&lt;</span><span class="t">title</span><span class="p">&gt;</span><span class="w">SIMINLAB</span><span class="ws">·</span><span class="w">-</span><span class="ws">·</span><span class="y">{</span><span class="pu">{</span><span class="ws">·</span><span class="a">$title</span><span class="ws">·</span><span class="w">??</span><span class="ws">·</span><span class="s">'Dashboard'</span><span class="ws">·</span><span class="pu">}</span><span class="y">}</span><span class="p">&lt;/</span><span class="t">title</span><span class="p">&gt;</span></div>
<div class="num act" style="top:224px">7</div>
<div class="ln" style="top:246px"><span class="w">  </span><span class="p">&lt;</span><span class="t">link</span><span class="w"> </span><span class="a">rel</span><span class="w">=</span><span class="s">&quot;shortcut icon&quot;</span><span class="w"> </span><span class="a">type</span><span class="w">=</span><span class="s">&quot;image/png&quot;</span><span class="w"> </span><span class="a">href</span><span class="w">=</span><span class="s">&quot;</span><span class="g">{{</span><span class="w"> </span><span class="f">asset</span><span class="s">(&#x27;template-admin/src/assets/images/logos/favicon.png&#x27;)</span><span class="w"> </span><span class="g">}}</span><span class="s">&quot;</span><span class="w"> </span><span class="p">/&gt;</span></div>
<div class="num" style="top:246px">8</div>
<div class="ln" style="top:268px"><span class="w">  </span><span class="p">&lt;</span><span class="t">link</span><span class="w"> </span><span class="a">rel</span><span class="w">=</span><span class="s">&quot;stylesheet&quot;</span><span class="w"> </span><span class="a">href</span><span class="w">=</span><span class="s">&quot;</span><span class="g">{{</span><span class="w"> </span><span class="f">asset</span><span class="s">(&#x27;template-admin/src/assets/css/styles.min.css&#x27;)</span><span class="g">}}</span><span class="w">&quot;</span><span class="w"> </span><span class="p">/&gt;</span></div>
<div class="num" style="top:268px">9</div>
<div class="ln" style="top:290px"><span class="w">  </span><span class="k">@yield</span><span class="y">(</span><span class="s">&#x27;css&#x27;</span><span class="y">)</span></div>
<div class="num" style="top:290px">10</div>
<div class="ln" style="top:312px"><span class="p">&lt;/</span><span class="t">head</span><span class="p">&gt;</span></div>
<div class="num" style="top:312px">11</div>
<div class="ln" style="top:334px"></div>
<div class="num" style="top:334px">12</div>
<div class="ln" style="top:356px"><span class="p">&lt;</span><span class="t">body</span><span class="p">&gt;</span></div>
<div class="num" style="top:356px">13</div>
<div class="ln" style="top:378px"><span class="w">  </span><span class="c">&lt;!--  Body Wrapper --&gt;</span></div>
<div class="num" style="top:378px">14</div>
<div class="ln" style="top:400px"><span class="w">  </span><span class="p">&lt;</span><span class="t">div</span><span class="w"> </span><span class="a">class</span><span class="w">=</span><span class="s">&quot;page-wrapper&quot;</span><span class="w"> </span><span class="a">id</span><span class="w">=</span><span class="s">&quot;main-wrapper&quot;</span><span class="w"> </span><span class="a">data-layout</span><span class="w">=</span><span class="s">&quot;vertical&quot;</span><span class="w"> </span><span class="a">data-navbarbg</span><span class="w">=</span><span class="s">&quot;skin6&quot;</span><span class="w"> </span><span class="a">data-sidebartype</span><span class="w">=</span><span class="s">&quot;full&quot;</span><span class="p"></span></div>
<div class="num" style="top:400px">15</div>
<div class="ln" style="top:422px"><span class="w">    </span><span class="a">data-sidebar-position</span><span class="w">=</span><span class="s">&quot;fixed&quot;</span><span class="w"> </span><span class="a">data-header-position</span><span class="w">=</span><span class="s">&quot;fixed&quot;</span><span class="p">&gt;</span></div>
<div class="num" style="top:422px">16</div>
<div class="ln" style="top:444px"><span class="w">    </span><span class="c">&lt;!-- Sidebar Start --&gt;</span></div>
<div class="num" style="top:444px">17</div>
<div class="ln" style="top:466px"><span class="w">    </span><span class="k">@include</span><span class="y">(</span><span class="s">&#x27;</span><span class="su">admin.layouts.sidebar</span><span class="s">&#x27;</span><span class="y">)</span></div>
<div class="num" style="top:466px">18</div>
<div class="ln" style="top:488px"><span class="w">    </span><span class="c">&lt;!--  Sidebar End --&gt;</span></div>
<div class="num" style="top:488px">19</div>
<div class="ln" style="top:510px"><span class="w">    </span><span class="c">&lt;!--  Main wrapper --&gt;</span></div>
<div class="num" style="top:510px">20</div>
<div class="ln" style="top:532px"><span class="w">    </span><span class="p">&lt;</span><span class="t">div</span><span class="w"> </span><span class="a">class</span><span class="w">=</span><span class="s">&quot;body-wrapper&quot;</span><span class="p">&gt;</span></div>
<div class="num" style="top:532px">21</div>
<div class="ln" style="top:554px"><span class="w">      </span><span class="c">&lt;!--  Header Start --&gt;</span></div>
<div class="num" style="top:554px">22</div>
<div class="ln" style="top:576px"><span class="w">      </span><span class="k">@include</span><span class="y">(</span><span class="s">&#x27;</span><span class="su">admin.layouts.header</span><span class="s">&#x27;</span><span class="y">)</span></div>
<div class="num" style="top:576px">23</div>
<div class="ln" style="top:598px"><span class="w">      </span><span class="c">&lt;!--  Header End --&gt;</span></div>
<div class="num" style="top:598px">24</div>
<div class="ln" style="top:620px"><span class="w">      </span><span class="p">&lt;</span><span class="t">div</span><span class="w"> </span><span class="a">class</span><span class="w">=</span><span class="s">&quot;container-fluid&quot;</span><span class="p">&gt;</span></div>
<div class="num" style="top:620px">25</div>
<div class="ln" style="top:642px"><span class="w">        </span><span class="k">@yield</span><span class="y">(</span><span class="s">&#x27;content&#x27;</span><span class="y">)</span></div>
<div class="num" style="top:642px">26</div>
<div class="ln" style="top:664px"><span class="w">      </span><span class="p">&lt;/</span><span class="t">div</span><span class="p">&gt;</span></div>
<div class="num" style="top:664px">27</div>
<div class="ln" style="top:686px"><span class="w">    </span><span class="p">&lt;/</span><span class="t">div</span><span class="p">&gt;</span></div>
<div class="num" style="top:686px">28</div>
<div class="ln" style="top:708px"><span class="w">  </span><span class="p">&lt;/</span><span class="t">div</span><span class="p">&gt;</span></div>
<div class="num" style="top:708px">29</div>
<div class="ln" style="top:730px"><span class="w">  </span><span class="p">&lt;</span><span class="t">script</span><span class="w"> </span><span class="a">src</span><span class="w">=</span><span class="s">&quot;</span><span class="g">{{</span><span class="w"> </span><span class="f">asset</span><span class="s">(&#x27;template-admin/src/assets/libs/jquery/dist/jquery.min.js&#x27;)</span><span class="w"> </span><span class="g">}}</span><span class="s">&quot;</span><span class="p">&gt;&lt;/</span><span class="t">script</span><span class="p">&gt;</span></div>
<div class="num" style="top:730px">30</div>
</div>
<div class="abs" style="left:74.0px;top:88px;width:1px;height:132px;background:#707070"></div>
<div class="abs" style="left:74.0px;top:286px;width:1px;height:366px;background:#404040"></div>
<div class="abs" style="left:91.6px;top:330px;width:1px;height:286px;background:#404040"></div>
<div class="abs" style="left:109.2px;top:462px;width:1px;height:132px;background:#404040"></div>
<div class="abs" style="left:126.8px;top:550px;width:1px;height:22px;background:#404040"></div>
<svg class="abs" style="left:74px;top:110px;" width="17" height="17" viewBox="0 0 17 17"><path d="M6.5 0.8 Q7.4 5.4 12 6.5 Q7.4 7.6 6.5 12.2 Q5.6 7.6 1 6.5 Q5.6 5.4 6.5 0.8 Z" fill="#f0c419" stroke="#f0c419" stroke-width="0.6"/><path d="M12.5 8.5 Q13 11.4 15.8 12 Q13 12.6 12.5 15.5 Q12 12.6 9.2 12 Q12 11.4 12.5 8.5 Z" fill="#f0c419" stroke="#f0c419" stroke-width="0.5"/></svg>
<div class="abs" style="left:74px;top:640px;width:662px;height:12px;background:rgba(121,121,121,0.5)"></div>
<div class="abs" style="left:919px;top:0;width:104px;height:652px;background:#1f1f1f"></div>
<div class="abs" style="left:911px;top:0;width:8px;height:652px;background:linear-gradient(to right,rgba(0,0,0,0),rgba(0,0,0,0.35))"></div>
<div class="abs" style="left:1023px;top:0;width:14px;height:289px;background:rgba(121,121,121,0.5)"></div>
<div class="abs" style="left:1023px;top:57px;width:14px;height:2px;background:#a0a0a0"></div>
<svg class="abs" style="left:927px;top:0px;" width="95" height="80" viewBox="0 0 95 80"><rect x="0" y="12" width="56" height="2" fill="#264f78"/><rect x="0" y="0" width="2" height="1.4" fill="#808080" opacity="0.42"/><rect x="2" y="0" width="7" height="1.4" fill="#569cd6" opacity="0.42"/><rect x="10" y="0" width="4" height="1.4" fill="#9cdcfe" opacity="0.42"/><rect x="14" y="0" width="1" height="1.4" fill="#808080" opacity="0.42"/><rect x="0" y="2" width="1" height="1.4" fill="#808080" opacity="0.42"/><rect x="1" y="2" width="4" height="1.4" fill="#569cd6" opacity="0.42"/><rect x="6" y="2" width="4" height="1.4" fill="#9cdcfe" opacity="0.42"/><rect x="10" y="2" width="1" height="1.4" fill="#d4d4d4" opacity="0.42"/><rect x="11" y="2" width="4" height="1.4" fill="#ce9178" opacity="0.42"/><rect x="15" y="2" width="1" height="1.4" fill="#808080" opacity="0.42"/><rect x="0" y="6" width="1" height="1.4" fill="#808080" opacity="0.42"/><rect x="1" y="6" width="4" height="1.4" fill="#569cd6" opacity="0.42"/><rect x="5" y="6" width="1" height="1.4" fill="#808080" opacity="0.42"/><rect x="2" y="8" width="1" height="1.4" fill="#808080" opacity="0.42"/><rect x="3" y="8" width="4" height="1.4" fill="#569cd6" opacity="0.42"/><rect x="8" y="8" width="7" height="1.4" fill="#9cdcfe" opacity="0.42"/><rect x="15" y="8" width="1" height="1.4" fill="#d4d4d4" opacity="0.42"/><rect x="16" y="8" width="7" height="1.4" fill="#ce9178" opacity="0.42"/><rect x="23" y="8" width="1" height="1.4" fill="#808080" opacity="0.42"/><rect x="2" y="10" width="1" height="1.4" fill="#808080" opacity="0.42"/><rect x="3" y="10" width="4" height="1.4" fill="#569cd6" opacity="0.42"/><rect x="8" y="10" width="4" height="1.4" fill="#9cdcfe" opacity="0.42"/><rect x="12" y="10" width="1" height="1.4" fill="#d4d4d4" opacity="0.42"/><rect x="13" y="10" width="10" height="1.4" fill="#ce9178" opacity="0.42"/><rect x="24" y="10" width="7" height="1.4" fill="#9cdcfe" opacity="0.42"/><rect x="31" y="10" width="1" height="1.4" fill="#d4d4d4" opacity="0.42"/><rect x="32" y="10" width="20" height="1.4" fill="#ce9178" opacity="0.42"/><rect x="53" y="10" width="16" height="1.4" fill="#ce9178" opacity="0.42"/><rect x="69" y="10" width="1" height="1.4" fill="#808080" opacity="0.42"/><rect x="2" y="12" width="1" height="1.4" fill="#808080" opacity="0.42"/><rect x="3" y="12" width="5" height="1.4" fill="#569cd6" opacity="0.42"/><rect x="8" y="12" width="1" height="1.4" fill="#808080" opacity="0.42"/><rect x="9" y="12" width="8" height="1.4" fill="#d4d4d4" opacity="0.42"/><rect x="18" y="12" width="1" height="1.4" fill="#d4d4d4" opacity="0.42"/><rect x="20" y="12" width="1" height="1.4" fill="#ffd700" opacity="0.42"/><rect x="21" y="12" width="1" height="1.4" fill="#da70d6" opacity="0.42"/><rect x="23" y="12" width="6" height="1.4" fill="#9cdcfe" opacity="0.42"/><rect x="30" y="12" width="2" height="1.4" fill="#d4d4d4" opacity="0.42"/><rect x="33" y="12" width="11" height="1.4" fill="#ce9178" opacity="0.42"/><rect x="45" y="12" width="1" height="1.4" fill="#da70d6" opacity="0.42"/><rect x="46" y="12" width="1" height="1.4" fill="#ffd700" opacity="0.42"/><rect x="47" y="12" width="2" height="1.4" fill="#808080" opacity="0.42"/><rect x="49" y="12" width="5" height="1.4" fill="#569cd6" opacity="0.42"/><rect x="54" y="12" width="1" height="1.4" fill="#808080" opacity="0.42"/><rect x="2" y="14" width="1" height="1.4" fill="#808080" opacity="0.42"/><rect x="3" y="14" width="4" height="1.4" fill="#569cd6" opacity="0.42"/><rect x="8" y="14" width="3" height="1.4" fill="#9cdcfe" opacity="0.42"/><rect x="11" y="14" width="1" height="1.4" fill="#d4d4d4" opacity="0.42"/><rect x="12" y="14" width="9" height="1.4" fill="#ce9178" opacity="0.42"/><rect x="22" y="14" width="5" height="1.4" fill="#ce9178" opacity="0.42"/><rect x="28" y="14" width="4" height="1.4" fill="#9cdcfe" opacity="0.42"/><rect x="32" y="14" width="1" height="1.4" fill="#d4d4d4" opacity="0.42"/><rect x="33" y="14" width="11" height="1.4" fill="#ce9178" opacity="0.42"/><rect x="45" y="14" width="4" height="1.4" fill="#9cdcfe" opacity="0.42"/><rect x="49" y="14" width="1" height="1.4" fill="#d4d4d4" opacity="0.42"/><rect x="50" y="14" width="1" height="1.4" fill="#ce9178" opacity="0.42"/><rect x="51" y="14" width="2" height="1.4" fill="#d7e3a3" opacity="0.42"/><rect x="54" y="14" width="5" height="1.4" fill="#dcdcaa" opacity="0.42"/><rect x="59" y="14" width="36" height="1.4" fill="#ce9178" opacity="0.42"/><rect x="2" y="16" width="1" height="1.4" fill="#808080" opacity="0.42"/><rect x="3" y="16" width="4" height="1.4" fill="#569cd6" opacity="0.42"/><rect x="8" y="16" width="3" height="1.4" fill="#9cdcfe" opacity="0.42"/><rect x="11" y="16" width="1" height="1.4" fill="#d4d4d4" opacity="0.42"/><rect x="12" y="16" width="12" height="1.4" fill="#ce9178" opacity="0.42"/><rect x="25" y="16" width="4" height="1.4" fill="#9cdcfe" opacity="0.42"/><rect x="29" y="16" width="1" height="1.4" fill="#d4d4d4" opacity="0.42"/><rect x="30" y="16" width="1" height="1.4" fill="#ce9178" opacity="0.42"/><rect x="31" y="16" width="2" height="1.4" fill="#d7e3a3" opacity="0.42"/><rect x="34" y="16" width="5" height="1.4" fill="#dcdcaa" opacity="0.42"/><rect x="39" y="16" width="48" height="1.4" fill="#ce9178" opacity="0.42"/><rect x="87" y="16" width="2" height="1.4" fill="#d7e3a3" opacity="0.42"/><rect x="89" y="16" width="1" height="1.4" fill="#d4d4d4" opacity="0.42"/><rect x="91" y="16" width="2" height="1.4" fill="#808080" opacity="0.42"/><rect x="2" y="18" width="6" height="1.4" fill="#569cd6" opacity="0.42"/><rect x="8" y="18" width="1" height="1.4" fill="#ffd700" opacity="0.42"/><rect x="9" y="18" width="5" height="1.4" fill="#ce9178" opacity="0.42"/><rect x="14" y="18" width="1" height="1.4" fill="#ffd700" opacity="0.42"/><rect x="0" y="20" width="2" height="1.4" fill="#808080" opacity="0.42"/><rect x="2" y="20" width="4" height="1.4" fill="#569cd6" opacity="0.42"/><rect x="6" y="20" width="1" height="1.4" fill="#808080" opacity="0.42"/><rect x="0" y="24" width="1" height="1.4" fill="#808080" opacity="0.42"/><rect x="1" y="24" width="4" height="1.4" fill="#569cd6" opacity="0.42"/><rect x="5" y="24" width="1" height="1.4" fill="#808080" opacity="0.42"/><rect x="2" y="26" width="4" height="1.4" fill="#6a9955" opacity="0.42"/><rect x="8" y="26" width="4" height="1.4" fill="#6a9955" opacity="0.42"/><rect x="13" y="26" width="7" height="1.4" fill="#6a9955" opacity="0.42"/><rect x="21" y="26" width="3" height="1.4" fill="#6a9955" opacity="0.42"/><rect x="2" y="28" width="1" height="1.4" fill="#808080" opacity="0.42"/><rect x="3" y="28" width="3" height="1.4" fill="#569cd6" opacity="0.42"/><rect x="7" y="28" width="5" height="1.4" fill="#9cdcfe" opacity="0.42"/><rect x="12" y="28" width="1" height="1.4" fill="#d4d4d4" opacity="0.42"/><rect x="13" y="28" width="14" height="1.4" fill="#ce9178" opacity="0.42"/><rect x="28" y="28" width="2" height="1.4" fill="#9cdcfe" opacity="0.42"/><rect x="30" y="28" width="1" height="1.4" fill="#d4d4d4" opacity="0.42"/><rect x="31" y="28" width="14" height="1.4" fill="#ce9178" opacity="0.42"/><rect x="46" y="28" width="11" height="1.4" fill="#9cdcfe" opacity="0.42"/><rect x="57" y="28" width="1" height="1.4" fill="#d4d4d4" opacity="0.42"/><rect x="58" y="28" width="10" height="1.4" fill="#ce9178" opacity="0.42"/><rect x="69" y="28" width="13" height="1.4" fill="#9cdcfe" opacity="0.42"/><rect x="82" y="28" width="1" height="1.4" fill="#d4d4d4" opacity="0.42"/><rect x="83" y="28" width="7" height="1.4" fill="#ce9178" opacity="0.42"/><rect x="91" y="28" width="4" height="1.4" fill="#9cdcfe" opacity="0.42"/><rect x="4" y="30" width="21" height="1.4" fill="#9cdcfe" opacity="0.42"/><rect x="25" y="30" width="1" height="1.4" fill="#d4d4d4" opacity="0.42"/><rect x="26" y="30" width="7" height="1.4" fill="#ce9178" opacity="0.42"/><rect x="34" y="30" width="20" height="1.4" fill="#9cdcfe" opacity="0.42"/><rect x="54" y="30" width="1" height="1.4" fill="#d4d4d4" opacity="0.42"/><rect x="55" y="30" width="7" height="1.4" fill="#ce9178" opacity="0.42"/><rect x="62" y="30" width="1" height="1.4" fill="#808080" opacity="0.42"/><rect x="4" y="32" width="4" height="1.4" fill="#6a9955" opacity="0.42"/><rect x="9" y="32" width="7" height="1.4" fill="#6a9955" opacity="0.42"/><rect x="17" y="32" width="5" height="1.4" fill="#6a9955" opacity="0.42"/><rect x="23" y="32" width="3" height="1.4" fill="#6a9955" opacity="0.42"/><rect x="4" y="34" width="8" height="1.4" fill="#569cd6" opacity="0.42"/><rect x="12" y="34" width="1" height="1.4" fill="#ffd700" opacity="0.42"/><rect x="13" y="34" width="1" height="1.4" fill="#ce9178" opacity="0.42"/><rect x="14" y="34" width="21" height="1.4" fill="#ce9178" opacity="0.42"/><rect x="35" y="34" width="1" height="1.4" fill="#ce9178" opacity="0.42"/><rect x="36" y="34" width="1" height="1.4" fill="#ffd700" opacity="0.42"/><rect x="4" y="36" width="4" height="1.4" fill="#6a9955" opacity="0.42"/><rect x="10" y="36" width="7" height="1.4" fill="#6a9955" opacity="0.42"/><rect x="18" y="36" width="3" height="1.4" fill="#6a9955" opacity="0.42"/><rect x="22" y="36" width="3" height="1.4" fill="#6a9955" opacity="0.42"/><rect x="4" y="38" width="4" height="1.4" fill="#6a9955" opacity="0.42"/><rect x="10" y="38" width="4" height="1.4" fill="#6a9955" opacity="0.42"/><rect x="15" y="38" width="7" height="1.4" fill="#6a9955" opacity="0.42"/><rect x="23" y="38" width="3" height="1.4" fill="#6a9955" opacity="0.42"/><rect x="4" y="40" width="1" height="1.4" fill="#808080" opacity="0.42"/><rect x="5" y="40" width="3" height="1.4" fill="#569cd6" opacity="0.42"/><rect x="9" y="40" width="5" height="1.4" fill="#9cdcfe" opacity="0.42"/><rect x="14" y="40" width="1" height="1.4" fill="#d4d4d4" opacity="0.42"/><rect x="15" y="40" width="14" height="1.4" fill="#ce9178" opacity="0.42"/><rect x="29" y="40" width="1" height="1.4" fill="#808080" opacity="0.42"/><rect x="6" y="42" width="4" height="1.4" fill="#6a9955" opacity="0.42"/><rect x="12" y="42" width="6" height="1.4" fill="#6a9955" opacity="0.42"/><rect x="19" y="42" width="5" height="1.4" fill="#6a9955" opacity="0.42"/><rect x="25" y="42" width="3" height="1.4" fill="#6a9955" opacity="0.42"/><rect x="6" y="44" width="8" height="1.4" fill="#569cd6" opacity="0.42"/><rect x="14" y="44" width="1" height="1.4" fill="#ffd700" opacity="0.42"/><rect x="15" y="44" width="1" height="1.4" fill="#ce9178" opacity="0.42"/><rect x="16" y="44" width="20" height="1.4" fill="#ce9178" opacity="0.42"/><rect x="36" y="44" width="1" height="1.4" fill="#ce9178" opacity="0.42"/><rect x="37" y="44" width="1" height="1.4" fill="#ffd700" opacity="0.42"/><rect x="6" y="46" width="4" height="1.4" fill="#6a9955" opacity="0.42"/><rect x="12" y="46" width="6" height="1.4" fill="#6a9955" opacity="0.42"/><rect x="19" y="46" width="3" height="1.4" fill="#6a9955" opacity="0.42"/><rect x="23" y="46" width="3" height="1.4" fill="#6a9955" opacity="0.42"/><rect x="6" y="48" width="1" height="1.4" fill="#808080" opacity="0.42"/><rect x="7" y="48" width="3" height="1.4" fill="#569cd6" opacity="0.42"/><rect x="11" y="48" width="5" height="1.4" fill="#9cdcfe" opacity="0.42"/><rect x="16" y="48" width="1" height="1.4" fill="#d4d4d4" opacity="0.42"/><rect x="17" y="48" width="17" height="1.4" fill="#ce9178" opacity="0.42"/><rect x="34" y="48" width="1" height="1.4" fill="#808080" opacity="0.42"/><rect x="8" y="50" width="6" height="1.4" fill="#569cd6" opacity="0.42"/><rect x="14" y="50" width="1" height="1.4" fill="#ffd700" opacity="0.42"/><rect x="15" y="50" width="9" height="1.4" fill="#ce9178" opacity="0.42"/><rect x="24" y="50" width="1" height="1.4" fill="#ffd700" opacity="0.42"/><rect x="6" y="52" width="2" height="1.4" fill="#808080" opacity="0.42"/><rect x="8" y="52" width="3" height="1.4" fill="#569cd6" opacity="0.42"/><rect x="11" y="52" width="1" height="1.4" fill="#808080" opacity="0.42"/><rect x="4" y="54" width="2" height="1.4" fill="#808080" opacity="0.42"/><rect x="6" y="54" width="3" height="1.4" fill="#569cd6" opacity="0.42"/><rect x="9" y="54" width="1" height="1.4" fill="#808080" opacity="0.42"/><rect x="2" y="56" width="2" height="1.4" fill="#808080" opacity="0.42"/><rect x="4" y="56" width="3" height="1.4" fill="#569cd6" opacity="0.42"/><rect x="7" y="56" width="1" height="1.4" fill="#808080" opacity="0.42"/><rect x="2" y="58" width="1" height="1.4" fill="#808080" opacity="0.42"/><rect x="3" y="58" width="6" height="1.4" fill="#569cd6" opacity="0.42"/><rect x="10" y="58" width="3" height="1.4" fill="#9cdcfe" opacity="0.42"/><rect x="13" y="58" width="1" height="1.4" fill="#d4d4d4" opacity="0.42"/><rect x="14" y="58" width="1" height="1.4" fill="#ce9178" opacity="0.42"/><rect x="15" y="58" width="2" height="1.4" fill="#d7e3a3" opacity="0.42"/><rect x="18" y="58" width="5" height="1.4" fill="#dcdcaa" opacity="0.42"/><rect x="23" y="58" width="60" height="1.4" fill="#ce9178" opacity="0.42"/><rect x="84" y="58" width="2" height="1.4" fill="#d7e3a3" opacity="0.42"/><rect x="86" y="58" width="1" height="1.4" fill="#ce9178" opacity="0.42"/><rect x="87" y="58" width="3" height="1.4" fill="#808080" opacity="0.42"/><rect x="90" y="58" width="5" height="1.4" fill="#569cd6" opacity="0.42"/><rect x="2" y="60" width="1" height="1.4" fill="#808080" opacity="0.42"/><rect x="3" y="60" width="6" height="1.4" fill="#569cd6" opacity="0.42"/><rect x="10" y="60" width="3" height="1.4" fill="#9cdcfe" opacity="0.42"/><rect x="13" y="60" width="1" height="1.4" fill="#d4d4d4" opacity="0.42"/><rect x="14" y="60" width="1" height="1.4" fill="#ce9178" opacity="0.42"/><rect x="15" y="60" width="2" height="1.4" fill="#d7e3a3" opacity="0.42"/><rect x="18" y="60" width="5" height="1.4" fill="#dcdcaa" opacity="0.42"/><rect x="23" y="60" width="72" height="1.4" fill="#ce9178" opacity="0.42"/><rect x="2" y="62" width="1" height="1.4" fill="#808080" opacity="0.42"/><rect x="3" y="62" width="6" height="1.4" fill="#569cd6" opacity="0.42"/><rect x="10" y="62" width="3" height="1.4" fill="#9cdcfe" opacity="0.42"/><rect x="13" y="62" width="1" height="1.4" fill="#d4d4d4" opacity="0.42"/><rect x="14" y="62" width="1" height="1.4" fill="#ce9178" opacity="0.42"/><rect x="15" y="62" width="2" height="1.4" fill="#d7e3a3" opacity="0.42"/><rect x="18" y="62" width="5" height="1.4" fill="#dcdcaa" opacity="0.42"/><rect x="23" y="62" width="47" height="1.4" fill="#ce9178" opacity="0.42"/><rect x="71" y="62" width="2" height="1.4" fill="#d7e3a3" opacity="0.42"/><rect x="73" y="62" width="1" height="1.4" fill="#ce9178" opacity="0.42"/><rect x="74" y="62" width="3" height="1.4" fill="#808080" opacity="0.42"/><rect x="77" y="62" width="6" height="1.4" fill="#569cd6" opacity="0.42"/><rect x="83" y="62" width="1" height="1.4" fill="#808080" opacity="0.42"/><rect x="2" y="64" width="1" height="1.4" fill="#808080" opacity="0.42"/><rect x="3" y="64" width="6" height="1.4" fill="#569cd6" opacity="0.42"/><rect x="10" y="64" width="3" height="1.4" fill="#9cdcfe" opacity="0.42"/><rect x="13" y="64" width="1" height="1.4" fill="#d4d4d4" opacity="0.42"/><rect x="14" y="64" width="1" height="1.4" fill="#ce9178" opacity="0.42"/><rect x="15" y="64" width="2" height="1.4" fill="#d7e3a3" opacity="0.42"/><rect x="18" y="64" width="5" height="1.4" fill="#dcdcaa" opacity="0.42"/><rect x="23" y="64" width="43" height="1.4" fill="#ce9178" opacity="0.42"/><rect x="67" y="64" width="2" height="1.4" fill="#d7e3a3" opacity="0.42"/><rect x="69" y="64" width="1" height="1.4" fill="#ce9178" opacity="0.42"/><rect x="70" y="64" width="3" height="1.4" fill="#808080" opacity="0.42"/><rect x="73" y="64" width="6" height="1.4" fill="#569cd6" opacity="0.42"/><rect x="79" y="64" width="1" height="1.4" fill="#808080" opacity="0.42"/><rect x="2" y="66" width="1" height="1.4" fill="#808080" opacity="0.42"/><rect x="3" y="66" width="6" height="1.4" fill="#569cd6" opacity="0.42"/><rect x="10" y="66" width="3" height="1.4" fill="#9cdcfe" opacity="0.42"/><rect x="13" y="66" width="1" height="1.4" fill="#d4d4d4" opacity="0.42"/><rect x="14" y="66" width="1" height="1.4" fill="#ce9178" opacity="0.42"/><rect x="15" y="66" width="2" height="1.4" fill="#d7e3a3" opacity="0.42"/><rect x="18" y="66" width="5" height="1.4" fill="#dcdcaa" opacity="0.42"/><rect x="23" y="66" width="62" height="1.4" fill="#ce9178" opacity="0.42"/><rect x="86" y="66" width="2" height="1.4" fill="#d7e3a3" opacity="0.42"/><rect x="88" y="66" width="1" height="1.4" fill="#ce9178" opacity="0.42"/><rect x="89" y="66" width="3" height="1.4" fill="#808080" opacity="0.42"/><rect x="92" y="66" width="3" height="1.4" fill="#569cd6" opacity="0.42"/><rect x="2" y="68" width="6" height="1.4" fill="#569cd6" opacity="0.42"/><rect x="8" y="68" width="1" height="1.4" fill="#ffd700" opacity="0.42"/><rect x="9" y="68" width="4" height="1.4" fill="#ce9178" opacity="0.42"/><rect x="13" y="68" width="1" height="1.4" fill="#ffd700" opacity="0.42"/><rect x="0" y="70" width="2" height="1.4" fill="#808080" opacity="0.42"/><rect x="2" y="70" width="4" height="1.4" fill="#569cd6" opacity="0.42"/><rect x="6" y="70" width="1" height="1.4" fill="#808080" opacity="0.42"/><rect x="0" y="74" width="2" height="1.4" fill="#808080" opacity="0.42"/><rect x="2" y="74" width="4" height="1.4" fill="#569cd6" opacity="0.42"/><rect x="6" y="74" width="1" height="1.4" fill="#808080" opacity="0.42"/></svg>
</div>
<div id="status">
<div class="abs" style="left:0;top:0;width:34px;height:22px;background:#0078d4"></div>
<svg class="abs" style="left:10px;top:0px;" width="16" height="20" viewBox="0 0 16 20"><path d="M2.5 7.4 L7 11.3 L2.8 15.3 M11.6 4.2 L7.6 8 L11.6 11.5" stroke="#ffffff" stroke-width="1.4" fill="none"/></svg>
<svg class="abs" style="left:41px;top:3px;" width="16" height="16" viewBox="0 0 16 16"><circle cx="7.5" cy="8" r="6" stroke="#cccccc" stroke-width="1.2" fill="none"/><path d="M5.2 5.7 L9.8 10.3 M9.8 5.7 L5.2 10.3" stroke="#cccccc" stroke-width="1.2"/></svg>
<div class="abs" style="left:59.0px;top:4.7px;font-size:12px;color:#cccccc;line-height:1;white-space:pre;transform:scaleX(0.9591);transform-origin:0 0;">0</div>
<svg class="abs" style="left:69px;top:3px;" width="16" height="16" viewBox="0 0 16 16"><path d="M7 2 L13 13.5 H1 Z" stroke="#cccccc" stroke-width="1.2" fill="none" stroke-linejoin="round"/><path d="M7 6 V10 M7 11.3 V12.3" stroke="#cccccc" stroke-width="1.2"/></svg>
<div class="abs" style="left:86.6px;top:4.7px;font-size:12px;color:#cccccc;line-height:1;white-space:pre;transform:scaleX(0.9591);transform-origin:0 0;">0</div>
<svg class="abs" style="left:110px;top:3px;" width="12" height="16" viewBox="0 0 12 16"><path d="M7.5 1.5 L2.5 9 H6 L4.5 14.5 L9.5 7 H6 Z" stroke="#cccccc" stroke-width="1.1" fill="none" stroke-linejoin="round"/></svg>
<div class="abs" style="left:801.5px;top:4.7px;font-size:12px;color:#cccccc;line-height:1;white-space:pre;transform:scaleX(0.9523);transform-origin:0 0;">Ln 7, Col 1 (55 selected)</div>
<div class="abs" style="left:943.0px;top:4.7px;font-size:12px;color:#cccccc;line-height:1;white-space:pre;transform:scaleX(0.9051);transform-origin:0 0;">Spaces: 2</div>
<div class="abs" style="left:1007.3px;top:4.7px;font-size:12px;color:#cccccc;line-height:1;white-space:pre;transform:scaleX(0.9325);transform-origin:0 0;">UTF-8</div>
<div class="abs" style="left:1055.6px;top:4.7px;font-size:12px;color:#cccccc;line-height:1;white-space:pre;transform:scaleX(0.8425);transform-origin:0 0;">CRLF</div>
<div class="abs" style="left:1098.5px;top:5.3px;font-size:11px;color:#cccccc;line-height:1;white-space:pre;transform:scaleX(1.0764);transform-origin:0 0;">{ }</div>
<div class="abs" style="left:1117.7px;top:4.7px;font-size:12px;color:#cccccc;line-height:1;white-space:pre;transform:scaleX(0.9319);transform-origin:0 0;">Blade</div>
<svg class="abs" style="left:1162px;top:3px;" width="16" height="16" viewBox="0 0 16 16"><path d="M3 6 Q3 2.5 6 2.5 Q8 2.5 8 4.5 Q8 2.5 10 2.5 Q13 2.5 13 6 V7.5 L14.5 9 V12 Q11 14.5 8 14.5 Q5 14.5 1.5 12 V9 L3 7.5 Z" fill="#cccccc"/><rect x="5" y="8.5" width="1.6" height="3" fill="#181818"/><rect x="9.4" y="8.5" width="1.6" height="3" fill="#181818"/></svg>
<svg class="abs" style="left:1193px;top:3px;" width="14" height="16" viewBox="0 0 14 16"><path d="M3 10.5 Q1 8.5 1.5 6 Q2.5 1.5 7 1.5 Q11.5 1.5 12.5 6 Q13 8.5 11 10.5 M4.8 8.8 Q4 7.5 4.5 6 Q5.3 4 7 4 Q8.7 4 9.5 6 Q10 7.5 9.2 8.8" stroke="#cccccc" stroke-width="1.2" fill="none"/><circle cx="7" cy="6.8" r="1.3" fill="#cccccc"/><path d="M7 8 V15" stroke="#cccccc" stroke-width="1.5"/></svg>
<div class="abs" style="left:1210.4px;top:4.7px;font-size:12px;color:#cccccc;line-height:1;white-space:pre;transform:scaleX(0.9334);transform-origin:0 0;">Go Live</div>
<svg class="abs" style="left:1265px;top:3px;" width="14" height="16" viewBox="0 0 14 16"><circle cx="6.5" cy="8" r="5.5" stroke="#cccccc" stroke-width="1.2" fill="none"/><path d="M2.8 11.7 L10.2 4.3" stroke="#cccccc" stroke-width="1.2"/></svg>
<div class="abs" style="left:1283.0px;top:4.7px;font-size:12px;color:#cccccc;line-height:1;white-space:pre;transform:scaleX(0.9748);transform-origin:0 0;">Prettier</div>
<svg class="abs" style="left:1338px;top:3px;" width="13" height="16" viewBox="0 0 13 16"><path d="M6.5 2 Q10.5 2 10.5 6.5 V10 L12 12 H1 L2.5 10 V6.5 Q2.5 2 6.5 2 Z M5 13.5 H8" stroke="#cccccc" stroke-width="1.2" fill="none" stroke-linejoin="round"/></svg>
</div>
<div id="bottomblack"></div>
</body></html>
